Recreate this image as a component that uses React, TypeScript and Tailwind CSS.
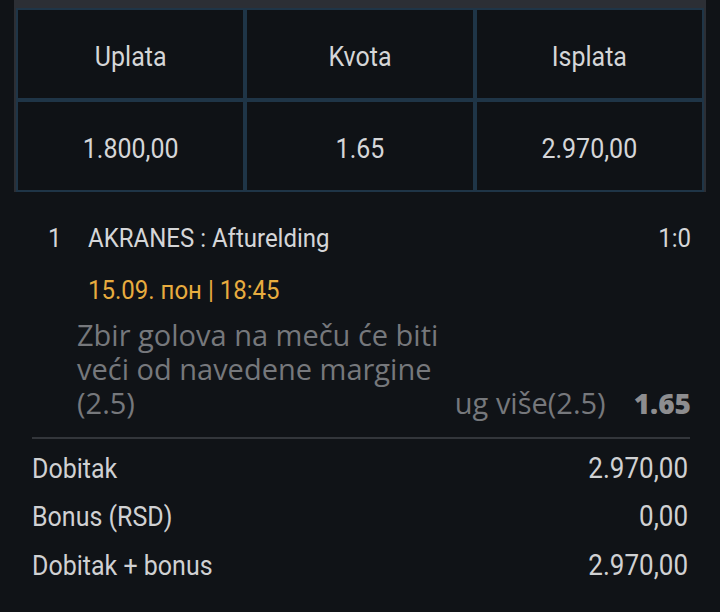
export default function App() {
  return (
    <div className="min-h-[612px] w-[720px] bg-[#101317] font-['Roboto',sans-serif] text-[#d5d6d8]">
      {/* Stake / odds / payout table */}
      <div className="mx-[14px] bg-[#2c2f35] px-[2px] pt-[8px]">
        <div className="grid grid-cols-3 gap-[4px] bg-[#1f3547] p-[2px]">
          <Cell text="Uplata" />
          <Cell text="Kvota" />
          <Cell text="Isplata" />
          <Cell text="1.800,00" />
          <Cell text="1.65" />
          <Cell text="2.970,00" />
        </div>
      </div>

      {/* Bet row */}
      <div className="pt-[32px]">
        <div className="flex h-[28px] items-center pl-[48px] pr-[29px] text-[24px]">
          <span className="inline-block w-[40px] scale-y-110">1</span>
          <span className="inline-block flex-1 origin-left scale-y-110">AKRANES : Afturelding</span>
          <span className="inline-block scale-y-110">1:0</span>
        </div>
        <div className="mt-[24px] flex h-[28px] items-center pl-[88px] text-[24px] text-[#e8ac3f]">
          <span className="inline-block scale-y-110">15.09. пон | 18:45</span>
        </div>
        <div className="mt-[14px] flex items-end justify-between pl-[77px] pr-[29px] font-['Open_Sans',sans-serif] text-[29px] leading-[34px] text-[#76787c]">
          <div className="w-[372px]">Zbir golova na meču će biti veći od navedene margine (2.5)</div>
          <div className="flex items-end gap-[28px]">
            <span>ug više(2.5)</span>
            <span className="text-[28px] font-extrabold text-[#8d8d8f]">1.65</span>
          </div>
        </div>
      </div>

      <div className="ml-[32px] mr-[30px] mt-[17px] h-[2px] bg-[#33363b]" />

      {/* Totals */}
      <div className="mt-[5px] text-[25px] text-[#d0d1d3]">
        <TotalRow label="Dobitak" value="2.970,00" />
        <TotalRow label="Bonus (RSD)" value="0,00" />
        <TotalRow label="Dobitak + bonus" value="2.970,00" />
      </div>
    </div>
  );
}

function Cell({ text }: { text: string }) {
  return (
    <div className="flex h-[88px] items-center justify-center bg-[#0f1216] pt-[5px] text-[25px] text-[#d5d6d8]">
      <span className="inline-block scale-y-110">{text}</span>
    </div>
  );
}

function TotalRow({ label, value }: { label: string; value: string }) {
  return (
    <div className="flex h-[48.5px] items-center justify-between pl-[32px] pr-[32px]">
      <span className="inline-block scale-y-110">{label}</span>
      <span className="inline-block text-[26px] scale-y-110">{value}</span>
    </div>
  );
}
